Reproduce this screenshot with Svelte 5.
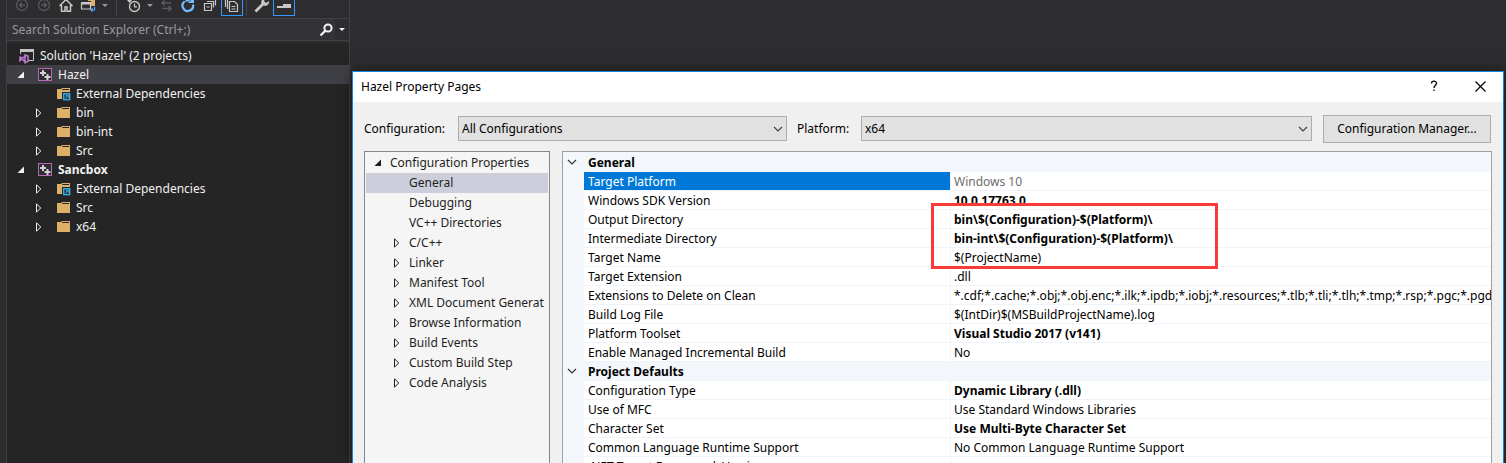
<script lang="ts">
	type SolutionItem = {
		name: string;
		level: number;
		icon: 'solution' | 'project' | 'external' | 'folder';
		arrow?: 'open' | 'closed';
		bold?: boolean;
	};

	type Property = { name: string; value: string; bold?: boolean };

	const solution: SolutionItem[] = [
		{ name: "Solution 'Hazel' (2 projects)", level: 0, icon: 'solution' },
		{ name: 'Hazel', level: 1, icon: 'project', arrow: 'open' },
		{ name: 'External Dependencies', level: 2, icon: 'external' },
		{ name: 'bin', level: 2, icon: 'folder', arrow: 'closed' },
		{ name: 'bin-int', level: 2, icon: 'folder', arrow: 'closed' },
		{ name: 'Src', level: 2, icon: 'folder', arrow: 'closed' },
		{ name: 'Sancbox', level: 1, icon: 'project', arrow: 'open', bold: true },
		{ name: 'External Dependencies', level: 2, icon: 'external', arrow: 'closed' },
		{ name: 'Src', level: 2, icon: 'folder', arrow: 'closed' },
		{ name: 'x64', level: 2, icon: 'folder', arrow: 'closed' }
	];

	const pages = [
		{ name: 'General', arrow: false },
		{ name: 'Debugging', arrow: false },
		{ name: 'VC++ Directories', arrow: false },
		{ name: 'C/C++', arrow: true },
		{ name: 'Linker', arrow: true },
		{ name: 'Manifest Tool', arrow: true },
		{ name: 'XML Document Generat', arrow: true },
		{ name: 'Browse Information', arrow: true },
		{ name: 'Build Events', arrow: true },
		{ name: 'Custom Build Step', arrow: true },
		{ name: 'Code Analysis', arrow: true }
	];

	const groups: { title: string; rows: Property[] }[] = [
		{
			title: 'General',
			rows: [
				{ name: 'Target Platform', value: 'Windows 10' },
				{ name: 'Windows SDK Version', value: '10.0.17763.0', bold: true },
				{ name: 'Output Directory', value: 'bin\\$(Configuration)-$(Platform)\\', bold: true },
				{ name: 'Intermediate Directory', value: 'bin-int\\$(Configuration)-$(Platform)\\', bold: true },
				{ name: 'Target Name', value: '$(ProjectName)' },
				{ name: 'Target Extension', value: '.dll' },
				{
					name: 'Extensions to Delete on Clean',
					value: '*.cdf;*.cache;*.obj;*.obj.enc;*.ilk;*.ipdb;*.iobj;*.resources;*.tlb;*.tli;*.tlh;*.tmp;*.rsp;*.pgc;*.pgd;*.m'
				},
				{ name: 'Build Log File', value: '$(IntDir)$(MSBuildProjectName).log' },
				{ name: 'Platform Toolset', value: 'Visual Studio 2017 (v141)', bold: true },
				{ name: 'Enable Managed Incremental Build', value: 'No' }
			]
		},
		{
			title: 'Project Defaults',
			rows: [
				{ name: 'Configuration Type', value: 'Dynamic Library (.dll)', bold: true },
				{ name: 'Use of MFC', value: 'Use Standard Windows Libraries' },
				{ name: 'Character Set', value: 'Use Multi-Byte Character Set', bold: true },
				{ name: 'Common Language Runtime Support', value: 'No Common Language Runtime Support' },
				{ name: '.NET Target Framework Version', value: '' }
			]
		}
	];

	let selectedItem = $state(1);
	let selectedPage = $state('General');
	let selectedProperty = $state('Target Platform');
</script>

{#snippet twisty(kind: string | undefined)}
	<svg class="twisty" width="8" height="10" viewBox="0 0 8 10" aria-hidden="true">
		{#if kind === 'open'}
			<path d="M7 1.5V8H.5z" fill="currentColor" />
		{:else if kind === 'closed'}
			<path d="M1.5 .8v8.4L5.7 5z" fill="none" stroke="currentColor" />
		{/if}
	</svg>
{/snippet}

{#snippet caret()}
	<svg width="6" height="3" viewBox="0 0 6 3" aria-hidden="true"><path d="M0 0h6L3 3z" fill="currentColor" /></svg>
{/snippet}

{#snippet chevron()}
	<svg class="chevron" width="10" height="6" viewBox="0 0 10 6" aria-hidden="true">
		<path d="M1 1l4 4 4-4" fill="none" stroke="currentColor" stroke-width="1.2" />
	</svg>
{/snippet}

{#snippet itemIcon(kind: string)}
	<svg class="item-icon" width="16" height="16" viewBox="0 0 16 16" aria-hidden="true">
		{#if kind === 'solution'}
			<path d="M1.5 6V1.5h13v11H9" fill="none" stroke="#c5c5c5" />
			<path d="M1 1h14v3H1z" fill="#c5c5c5" />
			<path d="M1 8.5v4l5-4.5v6L1 8.5M6 7l3 1v5.5l-3 1z" fill="none" stroke="#b978c8" stroke-width="1.6" />
		{:else if kind === 'project'}
			<rect x="1.5" y="1.5" width="13" height="12" fill="#2d2d30" stroke="#b767b5" />
			<path d="M5 3h2v2h2v2H7v2H5V7H3V5h2z" fill="#d0d0d0" />
			<path d="M9.500 7h2v2h2v2h-2v2h-2v-2h-2V9h2z" fill="#d0d0d0" />
		{:else}
			<path d="M2 3h4l1-1h8v11H2z" fill="#dcb067" />
			<path d="M7 4h7V3H7.5z" fill="#252526" />
			{#if kind === 'external'}
				<path d="M7 6h9v9H7z" fill="#252526" />
				<rect x="8.7" y="7.7" width="6" height="6" fill="#1b3a4f" stroke="#3fb0ee" stroke-width="1.3" />
				<path d="M10.300 12.200L13 9.500M11 9.300h2.200v2.200" fill="none" stroke="#3fb0ee" />
			{/if}
		{/if}
	</svg>
{/snippet}

<div class="desktop">
	<aside class="explorer">
		<div class="toolbar">
			<button class="tool dim" aria-label="Back">
				<svg width="16" height="16" viewBox="0 0 16 16">
					<circle cx="8" cy="8" r="5.5" fill="none" stroke="currentColor" stroke-width="1.3" />
					<path d="M11 8H5.5M8 5.5L5.5 8 8 10.5" fill="none" stroke="currentColor" stroke-width="1.3" />
				</svg>
			</button>
			<button class="tool dim" aria-label="Forward">
				<svg width="16" height="16" viewBox="0 0 16 16">
					<circle cx="8" cy="8" r="5.5" fill="none" stroke="currentColor" stroke-width="1.3" />
					<path d="M5 8h5.5M8 5.5L10.5 8 8 10.5" fill="none" stroke="currentColor" stroke-width="1.3" />
				</svg>
			</button>
			<button class="tool" aria-label="Home">
				<svg width="16" height="16" viewBox="0 0 16 16">
					<path d="M1.500 9L8 2.500 14.500 9M3.500 8v6.300H7V10h2v4.300h3.500V8" fill="none" stroke="currentColor" stroke-width="1.5" />
				</svg>
			</button>
			<button class="tool" aria-label="Switch views">
				<svg width="16" height="16" viewBox="0 0 16 16">
					<path d="M8 1h7v8h-4V4H8z" fill="#dcb067" />
					<path d="M1.5 6h9v6h-9z" fill="none" stroke="currentColor" stroke-width="1.2" />
					<path d="M1 5h10v2.5H1z" fill="currentColor" />
					<path d="M14.500 10v3H11M12.500 11.300L10.800 13l1.700 1.700" fill="none" stroke="#55aaff" stroke-width="1.2" />
				</svg>
			</button>
			<button class="drop" aria-label="More views">{@render caret()}</button>
			<span class="separator first"></span>
			<button class="tool" aria-label="Pending changes filter">
				<svg width="16" height="16" viewBox="0 0 16 16">
					<circle cx="8.5" cy="9.5" r="5" fill="none" stroke="currentColor" stroke-width="1.4" />
					<path d="M8.500 6.500v3.300H11" fill="none" stroke="currentColor" stroke-width="1.2" />
					<path d="M1 3h5L3.500 6z" fill="currentColor" />
				</svg>
			</button>
			<button class="drop narrow" aria-label="More filters">{@render caret()}</button>
			<button class="tool dim" aria-label="Sync with active document">
				<svg width="16" height="16" viewBox="0 0 16 16">
					<path d="M13 6H4M6.500 3.500L4 6l2.500 2.500M4 11.500h9M10.500 9l2.500 2.500-2.500 2.500" fill="none" stroke="currentColor" stroke-width="1.6" />
				</svg>
			</button>
			<button class="tool blue" aria-label="Refresh">
				<svg width="16" height="16" viewBox="0 0 16 16">
					<path d="M4.500 4.500A5.300 5.300 0 1 0 13 7.500" fill="none" stroke="currentColor" stroke-width="2.2" />
					<path d="M8 6h6V0zM4 5C6 2 9 2.500 11 4" fill="currentColor" />
				</svg>
			</button>
			<button class="tool" aria-label="Collapse all">
				<svg width="16" height="16" viewBox="0 0 16 16">
					<path d="M2.500 6.500h7v7h-7zM4.500 10h3M5 4.500h6.500v6M7.500 2.500h6v6" fill="none" stroke="currentColor" stroke-width="1.2" />
				</svg>
			</button>
			<button class="tool active" aria-label="Show all files">
				<svg width="16" height="16" viewBox="0 0 16 16">
					<path d="M5.500 4.500h5l3 3v7h-8zM3.500 12V2.500H9M1.500 10V.5H7M7.500 9.500h4M7.500 12h4" fill="none" stroke="currentColor" stroke-width="1.2" />
				</svg>
			</button>
			<span class="separator"></span>
			<button class="tool" aria-label="Properties">
				<svg width="16" height="16" viewBox="0 0 16 16">
					<path d="M1.500 14.500L9 7" stroke="currentColor" stroke-width="2.8" />
					<path d="M15 4a4 4 0 0 1-5.500 4.500L7.500 6.500A4 4 0 0 1 12 1.200L10 4l2 2z" fill="currentColor" />
				</svg>
			</button>
			<button class="tool active" aria-label="Preview selected items">
				<svg width="16" height="16" viewBox="0 0 16 16">
					<path d="M1 9h6V7h8v4H1z" fill="currentColor" />
				</svg>
			</button>
		</div>

		<div class="search">
			<input type="text" placeholder="Search Solution Explorer (Ctrl+;)" aria-label="Search Solution Explorer" />
			<button class="find" aria-label="Search">
				<svg width="14" height="14" viewBox="0 0 14 14">
					<circle cx="9" cy="5" r="3.6" fill="none" stroke="currentColor" stroke-width="2" />
					<path d="M6.500 7.500l-5 5" stroke="currentColor" stroke-width="2.4" />
				</svg>
			</button>
			<button class="options" aria-label="Search options">{@render caret()}</button>
		</div>

		<div class="tree" role="tree" aria-label="Solution Explorer">
			{#each solution as item, i}
				<button
					class="item level-{item.level}"
					class:selected={selectedItem === i}
					class:bold={item.bold}
					role="treeitem"
					aria-selected={selectedItem === i}
					onclick={() => (selectedItem = i)}
				>
					{#if item.level > 0}{@render twisty(item.arrow)}{/if}
					{@render itemIcon(item.icon)}
					<span>{item.name}</span>
				</button>
			{/each}
		</div>
	</aside>

	<main class="dialog">
		<header class="titlebar">
			<h1>Hazel Property Pages</h1>
			<button aria-label="Help">
				<svg width="10" height="12" viewBox="0 0 10 12">
					<path d="M2.500 3.500C2.500 .5 7.500 .5 7.500 3.300 7.500 5.200 5 5.300 5 8M5 9.500V11" fill="none" stroke="currentColor" stroke-width="1.3" />
				</svg>
			</button>
			<button aria-label="Close">
				<svg width="11" height="11" viewBox="0 0 11 11"><path d="M.5 .5l10 10M10.500 .5l-10 10" stroke="currentColor" stroke-width="1.2" /></svg>
			</button>
		</header>

		<div class="filters">
			<label for="configuration">Configuration:</label>
			<div class="combo configuration">
				<select id="configuration">
					<option>All Configurations</option>
					<option>Debug</option>
					<option>Release</option>
				</select>
				{@render chevron()}
			</div>
			<label class="platform-label" for="platform">Platform:</label>
			<div class="combo platform">
				<select id="platform">
					<option>x64</option>
					<option>Win32</option>
				</select>
				{@render chevron()}
			</div>
			<button class="manager">Configuration Manager...</button>
		</div>

		<div class="content">
			<nav class="pages" aria-label="Property pages">
				<button class="page root">{@render twisty('open')}<span>Configuration Properties</span></button>
				{#each pages as page}
					<button class="page" class:selected={selectedPage === page.name} onclick={() => (selectedPage = page.name)}>
						{@render twisty(page.arrow ? 'closed' : undefined)}<span>{page.name}</span>
					</button>
				{/each}
			</nav>

			<div class="grid">
				<table>
					<colgroup>
						<col class="gutter-col" />
						<col class="name-col" />
						<col />
					</colgroup>
					{#each groups as group}
						<tbody>
							<tr class="group">
								<td>{@render chevron()}</td>
								<th colspan="2">{group.title}</th>
							</tr>
							{#each group.rows as row}
								<tr class:selected={selectedProperty === row.name} onclick={() => (selectedProperty = row.name)}>
									<td class="gutter"></td>
									<th class="name" scope="row">{row.name}</th>
									<td class="value" class:bold={row.bold}>{row.value}</td>
								</tr>
							{/each}
						</tbody>
					{/each}
				</table>
				<div class="highlight"></div>
			</div>
		</div>
	</main>
</div>

<style>
	:global(body) {
		background: #2d2d30;
	}
	.desktop {
		display: flex;
		height: 100vh;
		overflow: hidden;
		background: #2d2d30;
		font-family: 'Noto Sans', sans-serif;
		font-size: 12px;
		line-height: 18px;
	}
	button {
		display: flex;
		align-items: center;
		margin: 0;
		padding: 0;
		border: 0;
		background: none;
		color: inherit;
		font: inherit;
	}
	svg {
		flex: none;
		display: block;
	}

	/* Solution Explorer */
	.explorer {
		flex: none;
		display: flex;
		flex-direction: column;
		box-sizing: border-box;
		width: 344px;
		margin-left: 6px;
		border-left: 1px solid #3f3f46;
		border-right: 1px solid #3f3f46;
		color: #f1f1f1;
	}
	.toolbar {
		flex: none;
		display: flex;
		align-items: flex-end;
		box-sizing: border-box;
		height: 18px;
		padding: 0 0 2px 4px;
		overflow: hidden;
		color: #c8c8c8;
	}
	.tool {
		justify-content: center;
		box-sizing: border-box;
		flex: none;
		width: 22px;
		height: 22px;
	}
	.tool.dim {
		color: #5a5a5d;
	}
	.tool.blue {
		color: #75bfff;
	}
	.tool.active {
		border: 1px solid #3399ff;
	}
	.drop {
		justify-content: center;
		width: 12px;
		height: 22px;
		color: #999;
	}
	.drop.narrow {
		width: 10px;
	}
	.separator {
		width: 1px;
		height: 20px;
		margin: 0 4px 0 3px;
		background: #46464a;
	}
	.separator.first {
		margin: 0 6px 0 5px;
	}
	.search {
		flex: none;
		display: flex;
		box-sizing: border-box;
		height: 23px;
		border: 1px solid #3f3f46;
		border-left: 0;
		border-right: 0;
		background: #333337;
	}
	.search input {
		flex: 1;
		min-width: 0;
		padding: 0 5px;
		border: 0;
		outline: 0;
		background: none;
		color: #f1f1f1;
		font: inherit;
	}
	.search input::placeholder {
		color: #999;
		opacity: 1;
	}
	.find {
		justify-content: center;
		width: 18px;
	}
	.options {
		justify-content: center;
		width: 14px;
		background: #2d2d30;
	}
	.tree {
		flex: 1;
		margin-top: 2px;
		padding-top: 3px;
		background: #252526;
	}
	.item {
		width: 100%;
		height: 19px;
		white-space: nowrap;
	}
	.item.level-0 {
		padding-left: 12px;
	}
	.item.level-1 {
		padding-left: 10px;
	}
	.item.level-2 {
		padding-left: 28px;
	}
	.item.selected {
		background: #3f3f46;
	}
	.item .twisty {
		margin-right: 12px;
	}
	.item-icon {
		margin-right: 5px;
	}
	.bold {
		font-weight: 700;
	}

	/* Property Pages dialog */
	.dialog {
		flex: 1;
		min-width: 0;
		display: flex;
		flex-direction: column;
		margin: 71px 2px 0;
		border: 1px solid #1883d7;
		border-bottom: 0;
		background: #f0f0f0;
		box-shadow: 0 0 12px rgba(0, 0, 0, 0.5);
		color: #000;
	}
	.titlebar {
		flex: none;
		display: flex;
		height: 30px;
		background: #fff;
	}
	.titlebar h1 {
		flex: 1;
		margin: 0;
		padding-left: 8px;
		font-size: 12px;
		font-weight: 400;
		line-height: 30px;
	}
	.titlebar button {
		justify-content: center;
		width: 46px;
		height: 28px;
	}
	.filters {
		flex: none;
		display: flex;
		align-items: center;
		padding: 13px 12px 8px 11px;
	}
	.filters label {
		flex: none;
		width: 94px;
	}
	.filters .platform-label {
		width: 64px;
		margin-left: 10px;
	}
	.combo {
		position: relative;
		height: 25px;
		margin-bottom: 1px;
	}
	.combo.configuration {
		flex: 329 1 0;
	}
	.combo.platform {
		flex: 451 1 0;
	}
	.combo select {
		box-sizing: border-box;
		width: 100%;
		height: 25px;
		padding: 0 20px 0 3px;
		border: 1px solid #adadad;
		border-radius: 0;
		appearance: none;
		background: #e1e1e1;
		color: #000;
		font: inherit;
	}
	.combo .chevron {
		position: absolute;
		top: 10px;
		right: 4px;
		color: #444;
		pointer-events: none;
	}
	.manager {
		justify-content: center;
		box-sizing: border-box;
		flex: none;
		width: 168px;
		height: 28px;
		margin-left: 11px;
		border: 1px solid #adadad;
		background: #e1e1e1;
	}
	.content {
		flex: 1;
		min-height: 0;
		display: flex;
		gap: 12px;
		padding: 0 11px;
	}
	.pages {
		flex: none;
		box-sizing: border-box;
		width: 186px;
		padding: 1px;
		border: 1px solid #828790;
		border-bottom: 0;
		background: #f5f5f5;
		color: #1e1e1e;
		overflow: hidden;
	}
	.page {
		width: 100%;
		height: 20px;
		padding-left: 27px;
		overflow: hidden;
		white-space: nowrap;
	}
	.page.root {
		padding-left: 8px;
	}
	.page.selected {
		background: #cccedb;
	}
	.page .twisty {
		margin-right: 8px;
	}
	.grid {
		position: relative;
		flex: 1;
		min-width: 0;
		padding-top: 1px;
		border: 1px solid #a0a0a0;
		border-bottom: 0;
		background: #f3f6fb;
		overflow: hidden;
	}
	table {
		width: 100%;
		border-collapse: separate;
		border-spacing: 0;
		table-layout: fixed;
		background: #fff;
	}
	.gutter-col {
		width: 21px;
	}
	.name-col {
		width: 367px;
	}
	th,
	td {
		box-sizing: border-box;
		height: 19px;
		padding: 2px 0 0 4px;
		border-bottom: 1px solid #f0f4fa;
		font-weight: 400;
		line-height: 16px;
		text-align: left;
		white-space: nowrap;
		overflow: hidden;
	}
	.group th,
	.group td,
	.gutter {
		border-color: #f3f6fb;
		background: #f3f6fb;
	}
	.group th {
		font-weight: 700;
	}
	.group td {
		padding-top: 0;
	}
	.group .chevron {
		color: #333;
	}
	.name {
		border-right: 1px solid #f0f4fa;
	}
	.value {
		padding-left: 3px;
	}
	.value.bold {
		font-weight: 700;
	}
	.selected .name {
		background: #0078d7;
		background-clip: padding-box;
		color: #fff;
	}
	.selected .value {
		color: #6d6d6d;
	}
	/* red frame over the output directory rows */
	.highlight {
		position: absolute;
		top: 51px;
		left: 368px;
		box-sizing: border-box;
		width: 287px;
		height: 66px;
		border: 3px solid #f93a37;
		pointer-events: none;
	}
</style>
